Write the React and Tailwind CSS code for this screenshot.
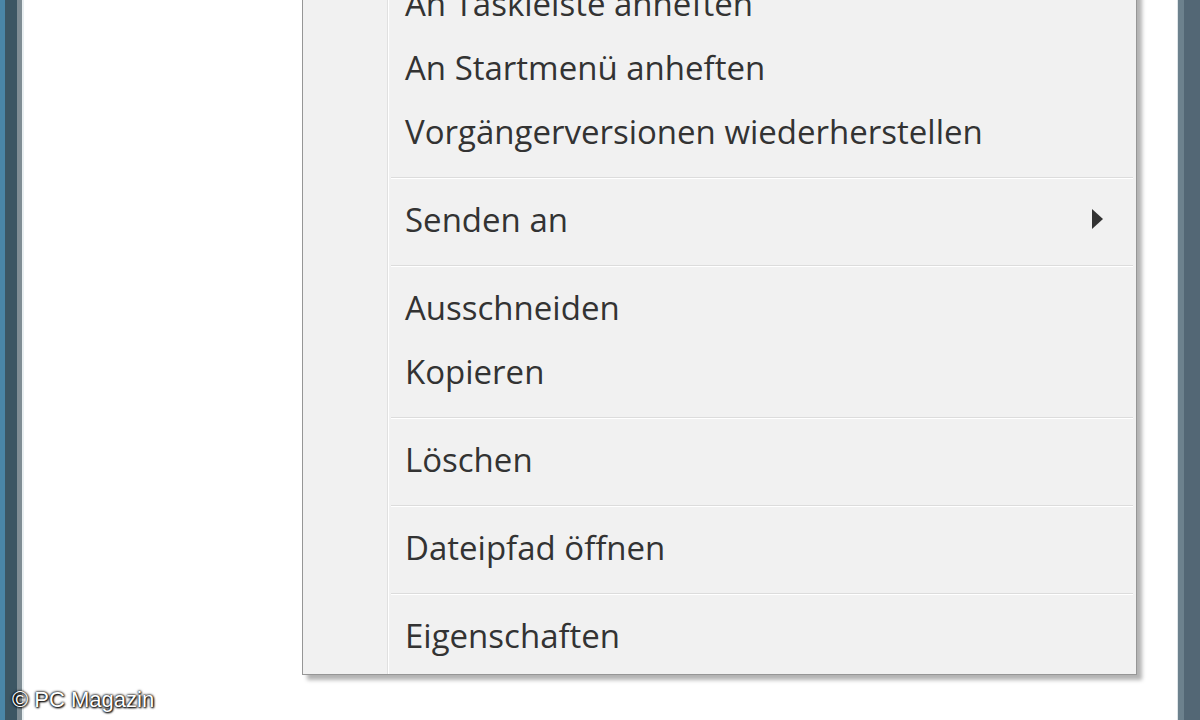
import React from "react";

const groups = [
  ["An Taskleiste anheften", "An Startmenü anheften", "Vorgängerversionen wiederherstellen"],
  ["Senden an"],
  ["Ausschneiden", "Kopieren"],
  ["Löschen"],
  ["Dateipfad öffnen"],
  ["Eigenschaften"],
];

function Separator() {
  return (
    <div className="h-[24px] pl-[88px] pr-[3px] pt-[12px]">
      <div className="h-px bg-[#dcdcdc]" />
      <div className="h-px bg-white" />
    </div>
  );
}

function MenuItem({ label }) {
  const hasSub = label === "Senden an";
  return (
    <div className="flex h-[64px] items-center justify-between pl-[102px] pr-[33px]">
      <span className="text-[33px] leading-none text-[#333333] pb-[4px]">{label}</span>
      {hasSub && (
        <svg width="12" height="20" viewBox="0 0 12 20" className="mb-[4px]">
          <path d="M1 0 L12 10 L1 20 Z" fill="#333" />
        </svg>
      )}
    </div>
  );
}

export default function App() {
  return (
    <div
      className="relative flex h-[720px] w-[1200px] overflow-hidden bg-white"
      style={{ fontFamily: '"Open Sans", "Noto Sans", sans-serif' }}
    >
      {/* left window frame */}
      <div className="flex w-[24px] shrink-0">
        <div className="w-[5px] bg-[#4a86a7]" />
        <div className="w-[12px] bg-[#3c5663]" />
        <div className="w-[5px] bg-[#7f8d94]" />
        <div className="w-[2px] bg-[#e8eef0]" />
      </div>

      {/* white client area */}
      <div className="flex-1 bg-white pl-[278px]">
        <div className="relative mt-[-30px] w-[835px] border border-[#969696] bg-[#f1f1f1] pt-[2px] pb-[5px] shadow-[5px_5px_4px_rgba(0,0,0,0.3)]">
          <div className="absolute top-0 bottom-0 left-[84px] flex">
            <div className="w-px bg-[#e0e0e0]" />
            <div className="w-px bg-white" />
          </div>
          <div className="relative">
            {groups.map((g, i) => (
              <div key={i}>
                {i > 0 && <Separator />}
                {g.map((label) => (
                  <MenuItem key={label} label={label} />
                ))}
              </div>
            ))}
          </div>
        </div>
      </div>

      {/* right window frame */}
      <div className="flex w-[23px] shrink-0">
        <div className="w-[1px] bg-[#dfe5e8]" />
        <div className="w-[6px] bg-[#6c818d]" />
        <div className="flex-1 bg-[#536775]" />
      </div>

      {/* watermark */}
      <div
        className="absolute bottom-[9px] left-[12px] text-[22px] leading-none text-white"
        style={{
          fontFamily: '"Liberation Sans", Arial, sans-serif',
          textShadow: "0 0 3px #000, 0 0 2px #000, 1px 1px 2px #000",
        }}
      >
        © PC Magazin
      </div>
    </div>
  );
}
